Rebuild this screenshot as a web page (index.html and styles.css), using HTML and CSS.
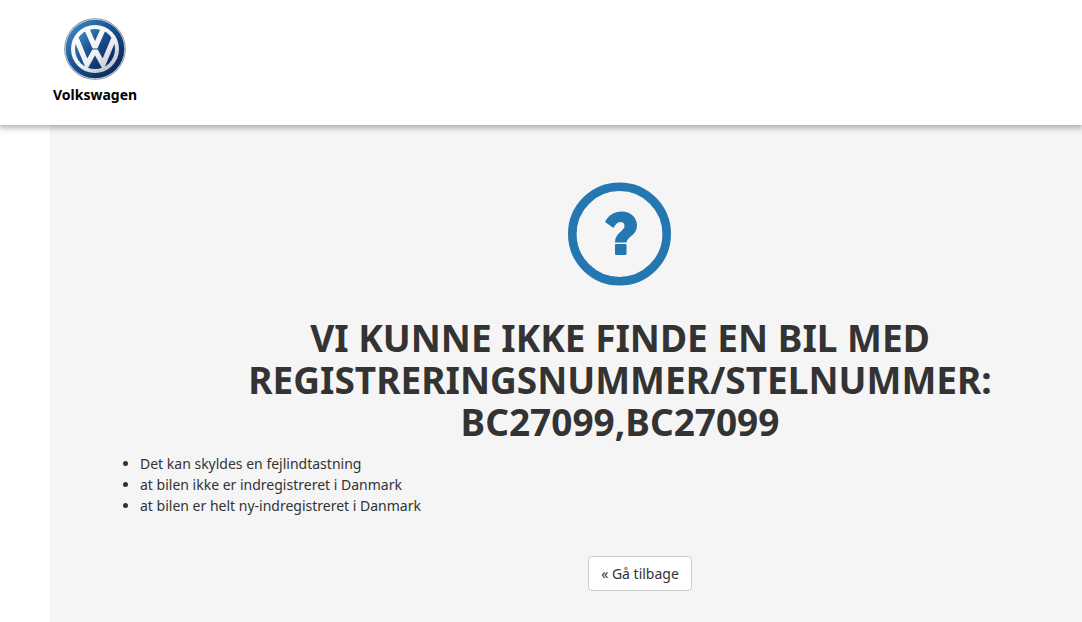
FILE: index.html
```html
<!DOCTYPE html>
<html lang="da">
<head>
<meta charset="utf-8">
<title>Volkswagen</title>
<link rel="stylesheet" href="styles.css">
</head>
<body>
<header class="site-header">
  <div class="brand">
    <svg class="brand-logo" viewBox="0 0 62 62" aria-hidden="true">
      <defs>
        <linearGradient id="blue" x1="0" y1="0.2" x2="0.8" y2="1">
          <stop offset="0" stop-color="#3d86bd"/>
          <stop offset="0.4" stop-color="#1b5596"/>
          <stop offset="1" stop-color="#0a2458"/>
        </linearGradient>
        <linearGradient id="silver" gradientUnits="userSpaceOnUse" x1="12" y1="8" x2="48" y2="54">
          <stop offset="0" stop-color="#ffffff"/>
          <stop offset="0.6" stop-color="#edf0f3"/>
          <stop offset="1" stop-color="#b4bbc3"/>
        </linearGradient>
        <clipPath id="disc"><circle cx="31" cy="31" r="23"/></clipPath>
      </defs>
      <circle cx="31" cy="31" r="30.8" fill="#7e8b9a"/>
      <circle cx="31" cy="31" r="30" fill="#d5dde5"/>
      <circle cx="31" cy="31" r="29.3" fill="url(#blue)"/>
      <circle cx="31" cy="31" r="24" fill="url(#silver)"/>
      <circle cx="31" cy="31" r="20" fill="url(#blue)"/>
      <g clip-path="url(#disc)" fill="none" stroke-miterlimit="8">
        <path d="M21 7 31 29.500 41 7" stroke="url(#silver)" stroke-width="5.200" stroke-linejoin="bevel"/>
        <path d="M9.500 14 23 46.500 31 32 39 46.500 52.500 14" stroke="url(#silver)" stroke-width="5.200" stroke-linejoin="miter"/>
        <path d="M28 31H34" stroke="#2a5791" stroke-width="1"/>
      </g>
    </svg>
    <span class="brand-name">Volkswagen</span>
  </div>
</header>
<main class="page">
  <section class="panel">
    <svg class="panel-icon" viewBox="0 0 104 104" aria-hidden="true">
      <circle cx="51.5" cy="52" r="47.2" fill="none" stroke="#2477b0" stroke-width="8.6"/>
      <path fill="#2477b0" d="M37 40C40.500 33 46.500 29.500 53.500 29.500C62.500 29.500 69 35.500 69 43.500C69 53.500 59 54.500 58.500 60.500H47C47 50.500 56.500 49.500 56.500 43.800C56.500 41.500 55 40 52.500 40C49.500 40 47.500 42 45.500 46ZM48 62H57.500Q58.500 62 58.500 63V72Q58.500 73 57.500 73H48Q47 73 47 72V63Q47 62 48 62Z"/>
    </svg>
    <h1 class="panel-title">VI KUNNE IKKE FINDE EN BIL MED<br>REGISTRERINGSNUMMER/STELNUMMER:<br>BC27099,BC27099</h1>
    <ul class="reasons">
      <li>Det kan skyldes en fejlindtastning</li>
      <li>at bilen ikke er indregistreret i Danmark</li>
      <li>at bilen er helt ny-indregistreret i Danmark</li>
    </ul>
    <div class="actions">
      <button class="back-button" type="button">« Gå tilbage</button>
    </div>
  </section>
</main>
</body>
</html>
```
FILE: styles.css
```css
* {
  box-sizing: border-box;
}

body {
  margin: 0;
  background: #fff;
  color: #333;
  font: 14px/21px "Noto Sans", sans-serif;
  display: flex;
  flex-direction: column;
  min-height: 100vh;
}

.site-header {
  position: relative;
  z-index: 1;
  padding: 18px 53px 20px;
  background: #fff;
  box-shadow: 0 2px 6px 1px rgba(0, 0, 0, 0.3);
}

.brand {
  display: inline-flex;
  flex-direction: column;
  align-items: center;
  gap: 5px;
}

.brand-logo {
  width: 62px;
  height: 62px;
}

.brand-name {
  color: #000;
  font-size: 14px;
  font-weight: 700;
  line-height: 20px;
}

.page {
  flex: 1;
  display: flex;
  padding-left: 50px;
  overflow-x: clip;
}

.panel {
  flex: 1 0 auto;
  min-width: 1140px;
  padding: 57px 50px 31px;
  background: #f5f5f5;
}

.panel-icon {
  display: block;
  width: 104px;
  height: 104px;
  margin: 0 auto 31px;
}

.panel-title {
  margin: 0 0 10px;
  font-size: 37px;
  font-weight: 700;
  line-height: 42px;
  text-align: center;
}

.reasons {
  margin: 0;
  padding-left: 40px;
}

.actions {
  margin-top: 40px;
  padding-left: 40px;
  text-align: center;
}

.back-button {
  padding: 6px 12px;
  border: 1px solid #ccc;
  border-radius: 4px;
  background: #fff;
  color: #333;
  font: inherit;
}
```
